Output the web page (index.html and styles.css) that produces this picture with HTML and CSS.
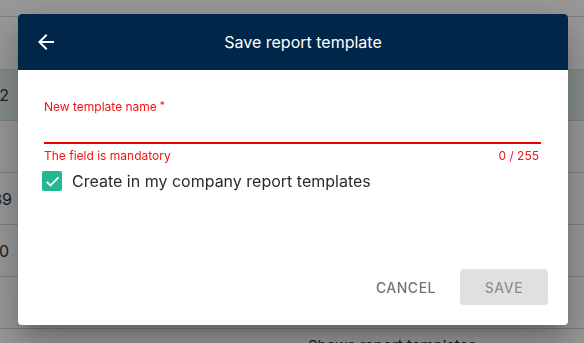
FILE: index.html
```html
<!DOCTYPE html>
<html lang="en">
<head>
  <meta charset="UTF-8" />
  <meta name="viewport" content="width=device-width, initial-scale=1.0"/>
  <title>Save report template</title>
  <link rel="stylesheet" href="styles.css">
</head>
<body>
  <div class="page">
    <div class="topbar"></div>
    <div class="table-head"></div>
    <div class="row selected"><span class="cell">12</span></div>
    <div class="row"><span class="cell"></span></div>
    <div class="row"><span class="cell wide">139</span></div>
    <div class="row"><span class="cell">10</span></div>
    <div class="row last"><span class="cell"></span></div>
    <div class="footer">Shows report templates</div>
  </div>

  <div class="overlay"></div>

  <div class="dialog">
    <div class="dialog-header">
      <button class="back" aria-label="Back">
        <svg width="24" height="24" viewBox="0 0 24 24"><path d="M20 11H7.83l5.59-5.59L12 4l-8 8 8 8 1.41-1.41L7.83 13H20v-2z" fill="#fff"/></svg>
      </button>
      <div class="dialog-title">Save report template</div>
    </div>

    <div class="dialog-body">
      <div class="field">
        <label class="field-label" for="name">New template name<span class="req">*</span></label>
        <input id="name" class="field-input" type="text" />
        <div class="field-hint">
          <span>The field is mandatory</span>
          <span>0 / 255</span>
        </div>
      </div>

      <label class="check">
        <span class="check-box">
          <svg width="17" height="17" viewBox="0 0 24 24"><path d="M9 16.17 4.83 12l-1.42 1.41L9 19 21 7l-1.41-1.41z" fill="#fff" stroke="#fff" stroke-width="0.8"/></svg>
        </span>
        <span class="check-label">Create in my company report templates</span>
      </label>
    </div>

    <div class="dialog-actions">
      <button class="btn btn-text">Cancel</button>
      <button class="btn btn-disabled" disabled>Save</button>
    </div>
  </div>
</body>
</html>
```

FILE: styles.css
```css
* {
  box-sizing: border-box;
}

body {
  margin: 0;
  width: 584px;
  height: 343px;
  overflow: hidden;
  font-family: Inter, 'Noto Sans', sans-serif;
  background: #ffffff;
}

.page {
  display: flex;
  flex-direction: column;
}

.page > div {
  flex-shrink: 0;
}

.topbar {
  height: 17px;
  border-bottom: 1px solid #d6d6d6;
}

.table-head {
  height: 53px;
  border-bottom: 1px solid #d6d6d6;
}

.row {
  height: 52px;
  display: flex;
  align-items: center;
  border-bottom: 1px solid #d6d6d6;
}

.row.selected {
  background: #e1ede6;
  height: 51px;
}

.cell {
  width: 9px;
  display: flex;
  justify-content: flex-end;
  overflow: hidden;
  font-size: 16px;
  color: #333333;
  white-space: nowrap;
}

.cell.wide {
  width: 12px;
}

.footer {
  margin-top: 8px;
  padding-left: 308px;
  font-size: 15px;
  line-height: 18px;
  color: #333;
  white-space: nowrap;
}

.overlay {
  position: fixed;
  inset: 0;
  background: rgba(0, 0, 0, 0.4);
}

.dialog {
  position: fixed;
  left: 18px;
  top: 14px;
  width: 550px;
  height: 311px;
  background: #ffffff;
  border-radius: 4px;
  overflow: hidden;
  display: flex;
  flex-direction: column;
  box-shadow: 0 11px 15px -7px rgba(0, 0, 0, 0.2),
              0 24px 38px 3px rgba(0, 0, 0, 0.14),
              0 9px 46px 8px rgba(0, 0, 0, 0.12);
}

.dialog-header {
  height: 56px;
  background: #00264a;
  display: flex;
  align-items: center;
  position: relative;
}

.back {
  position: absolute;
  left: 16px;
  top: 16px;
  width: 24px;
  height: 24px;
  padding: 0;
  border: none;
  background: none;
  cursor: pointer;
}

.dialog-title {
  flex: 1;
  text-align: center;
  color: #ffffff;
  font-size: 16px;
  padding-left: 20px;
}

.dialog-body {
  flex: 1;
  padding: 29px 27px 0 26px;
}

.field {
  display: flex;
  flex-direction: column;
}

.field-label {
  font-size: 12px;
  color: #f01414;
  line-height: 16px;
}

.req {
  margin-left: 3px;
  position: relative;
  top: -2px;
  font-size: 10px;
}

.field-input {
  margin-top: 6px;
  height: 23px;
  border: none;
  border-bottom: 2px solid #e80000;
  outline: none;
  font: inherit;
  padding: 0;
}

.field-hint {
  display: flex;
  justify-content: space-between;
  font-size: 12px;
  color: #f01414;
  line-height: 16px;
  margin-top: 4px;
  padding-right: 2px;
}

.check {
  display: flex;
  align-items: center;
  margin-top: 7px;
  margin-left: -2px;
}

.check-box {
  width: 20px;
  height: 20px;
  border-radius: 2px;
  background: #22b990;
  display: flex;
  align-items: center;
  justify-content: center;
}

.check-label {
  margin-left: 10px;
  font-size: 16px;
  color: #2b2b2b;
}

.dialog-actions {
  display: flex;
  justify-content: flex-end;
  gap: 8px;
  padding: 0 20px 20px 0;
}

.btn {
  height: 36px;
  padding: 0 16px;
  border: none;
  border-radius: 4px;
  font-family: inherit;
  font-size: 14px;
  font-weight: 500;
  letter-spacing: 0.5px;
  text-transform: uppercase;
  background: none;
}

.btn-text {
  color: #6b7780;
  cursor: pointer;
}

.btn-disabled {
  width: 88px;
  background: #e0e0e0;
  color: #8e8e8e;
}
```
